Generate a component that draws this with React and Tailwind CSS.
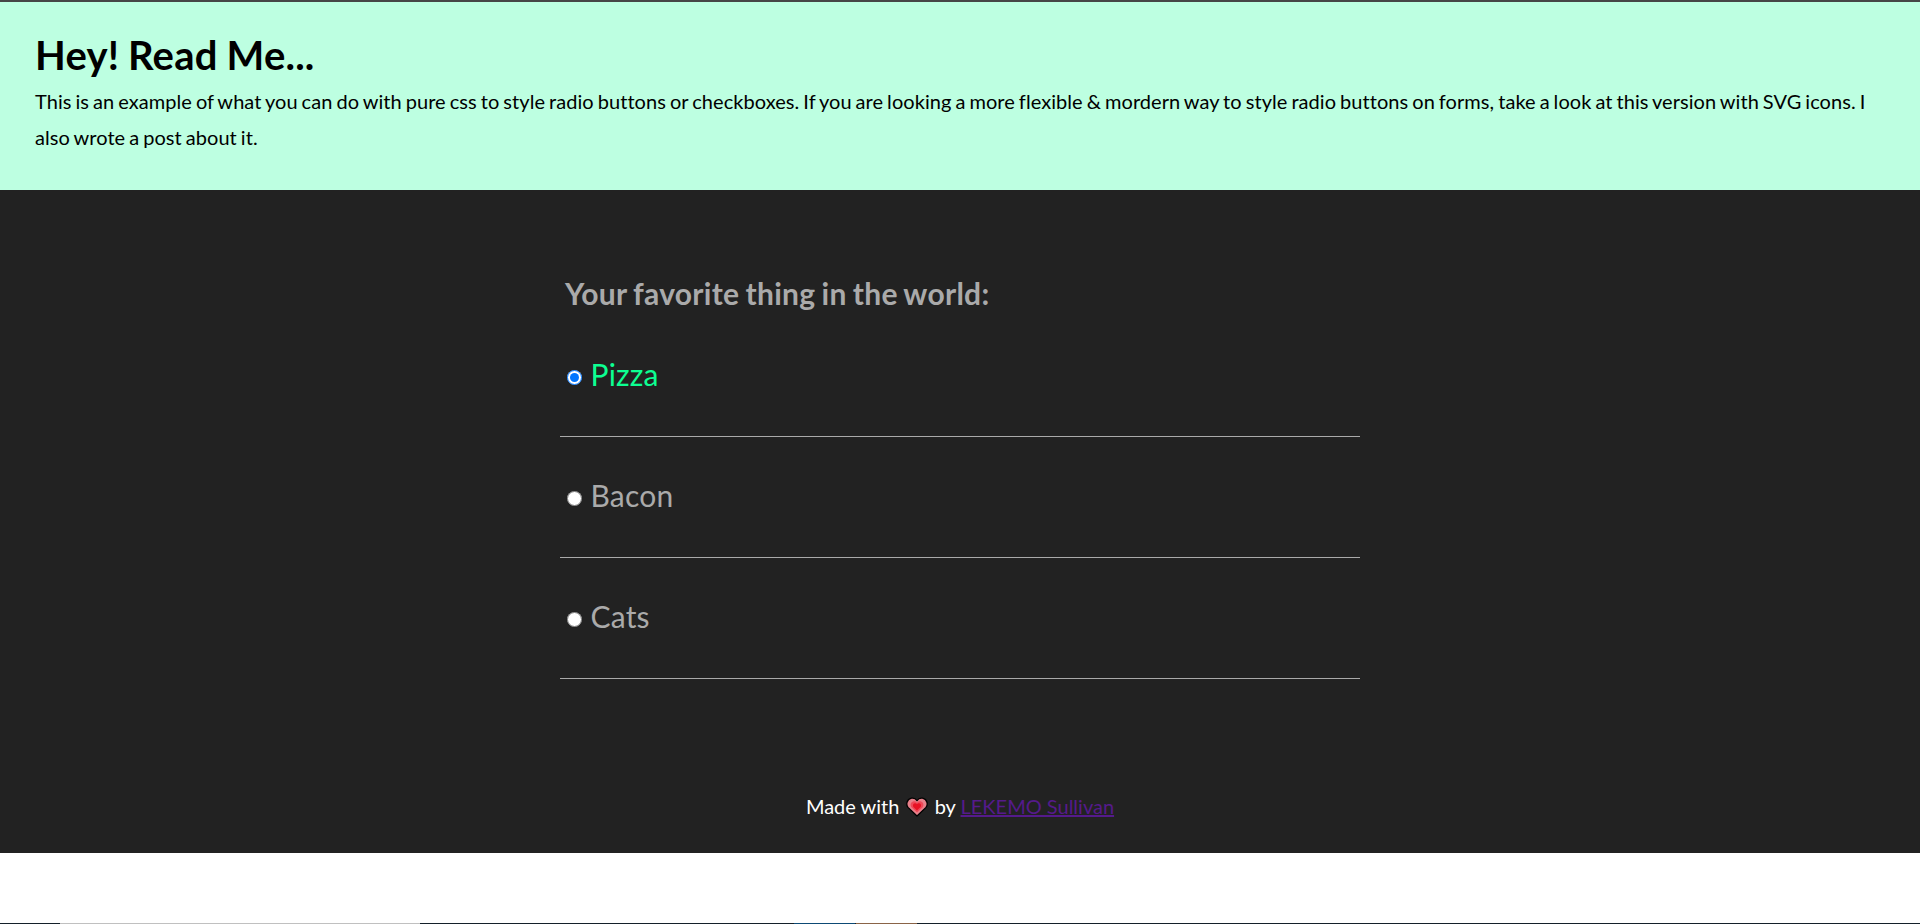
const items = ["Pizza", "Bacon", "Cats"];

function Heart() {
  const d = "M11 19 L2 10.4 C-0.2 7.6 0.6 2.4 5.4 1.2 C8 0.8 10 2 11 3.6 C12 2 14 0.8 16.6 1.2 C21.4 2.4 22.2 7.6 20 10.4 Z";
  return (
    <svg viewBox="0 0 22 20" className="mx-[1.5px] inline-block h-[20px] w-[22px] align-[-3px]" aria-label="heart">
      <path d={d} fill="#e8808a" stroke="#000" strokeWidth="1.3" strokeLinejoin="round" />
      <path d={d} fill="#ef4858" transform="translate(4.1 3.6) scale(.63)" />
      <path d={d} fill="#e81224" transform="translate(6.6 5.8) scale(.4)" />
    </svg>
  );
}

export default function App() {
  return (
    <div className="flex h-[924px] w-full flex-col overflow-hidden bg-white font-['Lato',sans-serif] text-black">
      <div className="h-[2px] bg-[#464646]" />
      <header className="h-[188px] bg-[#bdffe1] px-[35px] pt-[33px]">
        <h1 className="text-[40px] font-bold leading-[40px] tracking-[0.2px] [word-spacing:-1px]">Hey! Read Me...</h1>
        <p className="mt-[8px] text-[20px] leading-[36px] tracking-[0.06px] [word-spacing:-1.2px]">
          This is an example of what you can do with pure css to style radio buttons or checkboxes. If you are looking a more flexible &amp; mordern way to style radio buttons on forms, take a look at this version with SVG icons. I also wrote a post about it.
        </p>
      </header>
      <main className="flex h-[663px] flex-col items-center bg-[#222222] pt-[84px] text-[#aaaaaa]">
        <form className="w-[800px]">
          <h2 className="mb-[4px] px-[5px] text-[30px] font-bold leading-[38px] tracking-[0.28px] [word-spacing:-1.4px]">Your favorite thing in the world:</h2>
          {items.map((t, i) => (
            <label key={t} className={"flex h-[121px] items-start border-b border-[#aaaaaa] pl-[7px] pt-[40px] " + (i === 0 ? "text-[#0dff92]" : "")}>
              <input type="radio" name="thing" defaultChecked={i === 0} className="mr-[8.5px] mt-[14px] size-[15px]" />
              <span className="text-[30px] leading-[36px] tracking-[0.2px]">{t}</span>
            </label>
          ))}
        </form>
        <footer className="mt-[112px] text-[20px] leading-[30px] text-white">
          Made with <Heart /> by <a className="text-[#551a8b] underline">LEKEMO Sullivan</a>
        </footer>
      </main>
      <div className="grow" />
      <div className="flex h-px shrink-0 bg-[#14202a]">
        <div className="ml-[60px] w-[360px] bg-[#c0c0c0]" />
        <div className="ml-[374px] w-[61px] bg-[#0d4a75]" />
        <div className="ml-px w-[61px] bg-[#8a6448]" />
      </div>
    </div>
  );
}
